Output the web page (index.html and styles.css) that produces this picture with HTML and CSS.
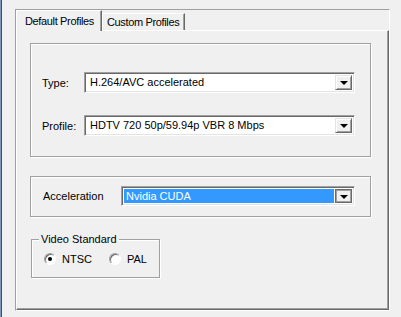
FILE: index.html
```html
<!DOCTYPE html>
<html lang="en">
<head>
  <meta charset="UTF-8" />
  <title>Encoder Settings</title>
  <link rel="stylesheet" href="styles.css">
</head>
<body>

<div class="window">
  <div class="frame">
    <div class="tabs">
      <div class="tab-row">
        <div class="tab active">Default Profiles</div>
        <div class="tab">Custom Profiles</div>
      </div>

      <div class="panel">
        <div class="group group-format">
          <div class="field">
            <label>Type:</label>
            <div class="combo"><span class="combo-text">H.264/AVC accelerated</span><span class="combo-btn"></span></div>
          </div>
          <div class="field">
            <label>Profile:</label>
            <div class="combo"><span class="combo-text">HDTV 720 50p/59.94p VBR 8 Mbps</span><span class="combo-btn"></span></div>
          </div>
        </div>

        <div class="group group-accel">
          <div class="field">
            <label>Acceleration</label>
            <div class="combo focused"><span class="combo-text selected">Nvidia CUDA</span><span class="combo-btn"></span></div>
          </div>
        </div>

        <div class="group group-std">
          <span class="legend">Video Standard</span>
          <div class="radios">
            <span class="radio-item"><span class="radio checked"></span>NTSC</span>
            <span class="radio-item"><span class="radio"></span>PAL</span>
          </div>
        </div>
      </div>
    </div>
  </div>
</div>

</body>
</html>
```

FILE: styles.css
```css
html, body {
  margin: 0;
  padding: 0;
  height: 100%;
}
body {
  background-color: #f0f0f0;
  font-family: "Liberation Sans", Arial, sans-serif;
  font-size: 11px;
  color: #000;
}
.window {
  height: 317px;
  box-sizing: border-box;
  border-left: 1px solid #7d98bb;
}
.frame {
  height: 100%;
  box-sizing: border-box;
  border-left: 1px solid #4e4e4e;
  padding: 9px 0 0 13px;
}
.tabs {
  width: 375px;
  height: 302px;
  box-sizing: border-box;
  border: 1px solid;
  border-color: #a0a0a0 #fff #fff #a0a0a0;
  display: flex;
  flex-direction: column;
}
.tab-row {
  display: flex;
  align-items: flex-start;
  height: 20px;
  position: relative;
  z-index: 1;
}
.tab {
  box-sizing: border-box;
  height: 17px;
  margin-top: 3px;
  padding: 2px 0 0 4px;
  width: 83px;
  white-space: nowrap;
  letter-spacing: -0.35px;
  border-top: 1px solid #fff;
  border-left: 1px solid #fff;
  border-right: 1px solid #696969;
  box-shadow: inset -1px 0 0 #a0a0a0;
  background-color: #f0f0f0;
}
.tab.active {
  height: 21px;
  margin-top: 0;
  width: 86px;
  padding: 4px 0 0 8px;
}
.panel {
  flex: 1;
  box-sizing: border-box;
  border-top: 1px solid #fff;
  border-left: 1px solid #fff;
  border-right: 1px solid #696969;
  border-bottom: 1px solid #696969;
  box-shadow: inset -1px -1px 0 #a0a0a0;
  padding: 12px 0 0 13px;
}
.group {
  box-sizing: border-box;
  width: 341px;
  border: 1px solid #a0a0a0;
  box-shadow: inset 1px 1px 0 #fff, 1px 1px 0 #fff;
}
.group-format {
  height: 114px;
  padding: 28px 0 0 11px;
}
.group-format label {
  width: 42px;
}
.group-format .field + .field {
  margin-top: 22px;
}
.group-format .combo {
  width: 271px;
  height: 21px;
}
.group-accel {
  height: 41px;
  margin-top: 19px;
  padding: 9px 0 0 12px;
}
.group-accel label {
  width: 78px;
}
.group-accel .combo {
  width: 234px;
  height: 20px;
}
.field {
  display: flex;
  align-items: center;
}
.combo {
  box-sizing: border-box;
  display: flex;
  align-items: center;
  background-color: #fff;
  border: 1px solid;
  border-color: #a0a0a0 #fff #fff #a0a0a0;
  box-shadow: inset 1px 1px 0 #696969, inset -1px -1px 0 #e3e3e3;
  padding: 2px;
}
.combo-text {
  flex: 1;
  padding-left: 3px;
  line-height: 15px;
}
.combo-text.selected {
  align-self: stretch;
  background-color: #3399ff;
  color: #fff;
  padding-left: 2px;
  margin-right: 1px;
  display: flex;
  align-items: center;
}
.combo-btn {
  box-sizing: border-box;
  width: 17px;
  align-self: stretch;
  background-color: #f0f0f0;
  border: 1px solid;
  border-color: #e3e3e3 #696969 #696969 #e3e3e3;
  box-shadow: inset 1px 1px 0 #fff, inset -1px -1px 0 #a0a0a0;
  display: flex;
  align-items: center;
  justify-content: center;
}
.combo-btn::before {
  content: "";
  border-left: 4px solid transparent;
  border-right: 4px solid transparent;
  border-top: 4px solid #000;
  margin-top: 1px;
}
.focused .combo-btn {
  border-color: #696969;
  box-shadow: inset 1px 1px 0 #a0a0a0, inset -1px -1px 0 #a0a0a0;
}
.group-std {
  position: relative;
  width: 129px;
  height: 39px;
  margin: 22px 0 0 1px;
  padding: 13px 0 0 12px;
}
.legend {
  position: absolute;
  top: -7px;
  left: 7px;
  padding: 0 2px;
  background-color: #f0f0f0;
  line-height: 13px;
}
.radios {
  display: flex;
  gap: 17px;
}
.radio-item {
  display: flex;
  align-items: center;
  gap: 6px;
}
.radio {
  box-sizing: border-box;
  width: 12px;
  height: 12px;
  border-radius: 50%;
  background-color: #fff;
  border: 1px solid;
  border-color: #a0a0a0 #fff #fff #a0a0a0;
  box-shadow: inset 1px 1px 0 #696969;
  display: flex;
  align-items: center;
  justify-content: center;
}
.radio.checked::before {
  content: "";
  width: 4px;
  height: 4px;
  border-radius: 50%;
  background-color: #000;
}
```
